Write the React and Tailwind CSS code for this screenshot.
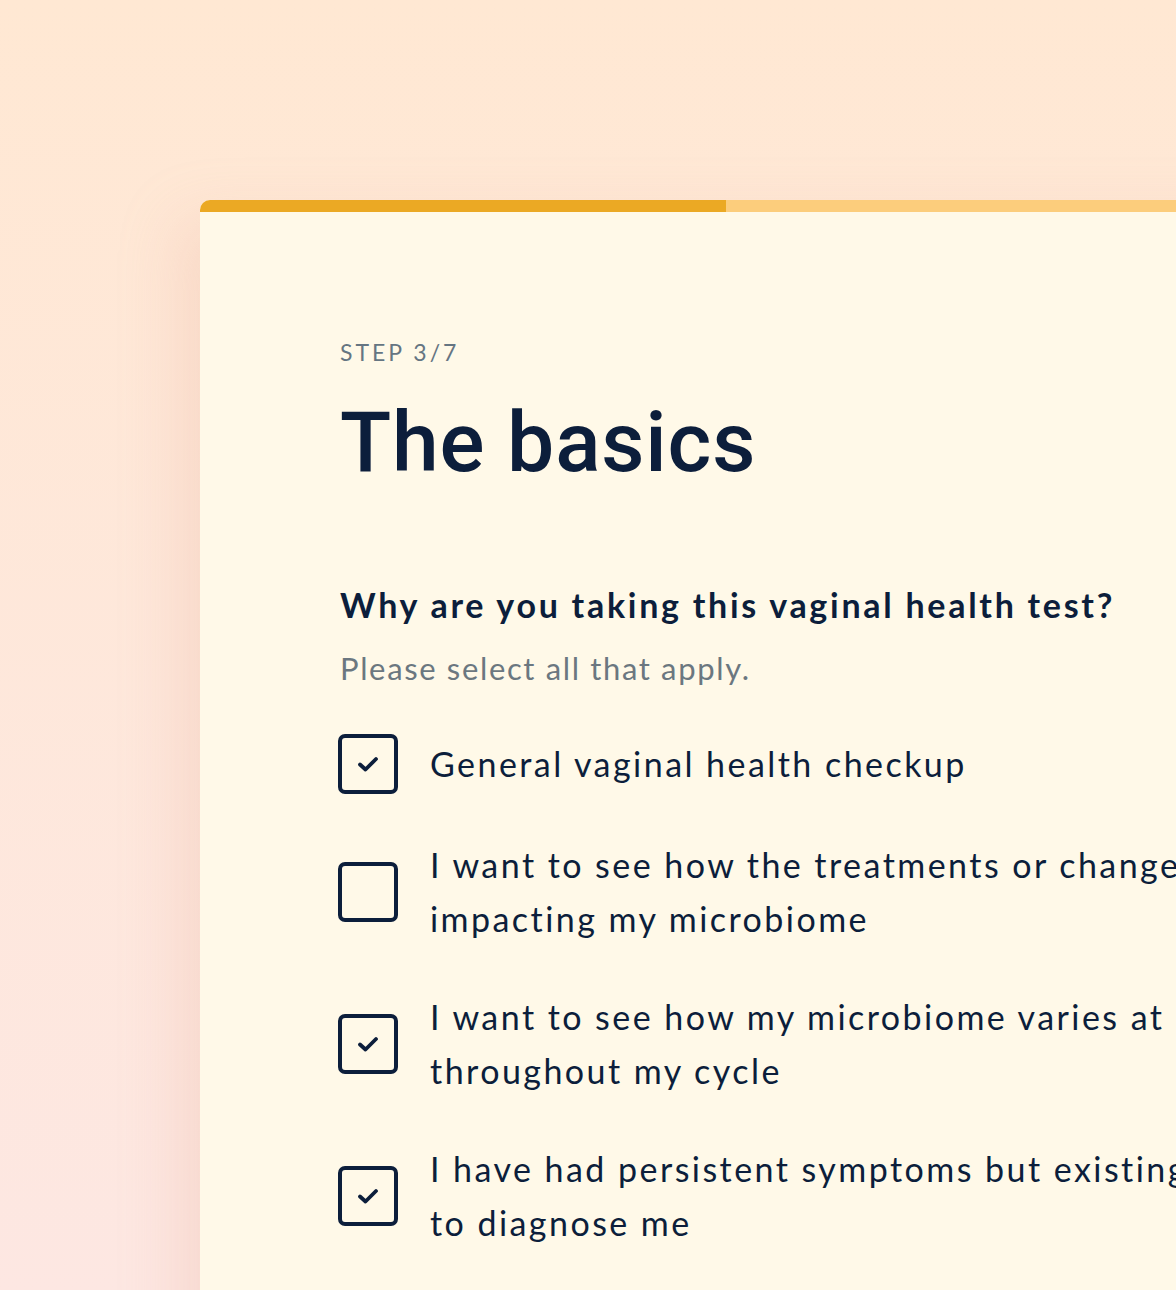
const options = [
  { lines: ['General vaginal health checkup'], checked: true },
  {
    lines: ["I want to see how the treatments or changes I've made are", 'impacting my microbiome'],
    checked: false,
  },
  {
    lines: ['I want to see how my microbiome varies at different points', 'throughout my cycle'],
    checked: true,
  },
  {
    lines: ['I have had persistent symptoms but existing tests have failed', 'to diagnose me'],
    checked: true,
  },
]

function Checkbox({ checked }) {
  return (
    <div className="flex h-[60px] w-[60px] shrink-0 items-center justify-center rounded-[7px] border-[4px] border-[#0c1e3b]">
      {checked && (
        <svg width="22" height="16" viewBox="0 0 22 16" fill="none">
          <path d="M3 8.5 L8.5 13.5 L19 3" stroke="#0c1e3b" strokeWidth="3.8" strokeLinecap="round" strokeLinejoin="round" />
        </svg>
      )}
    </div>
  )
}

export default function App() {
  return (
    <div
      className="h-[1290px] w-[1176px] overflow-hidden bg-gradient-to-b from-[#ffe8d3] to-[#fde7e2] pt-[200px] pl-[200px] text-[#0c1e3b]"
      style={{ fontFamily: 'Lato, "Noto Sans", sans-serif' }}
    >
      <div className="h-[1200px] w-[1500px] overflow-hidden rounded-tl-[10px] bg-[#fff9e8] shadow-[-20px_20px_60px_rgba(230,170,150,0.25)]">
        <div className="flex h-[12px]">
          <div className="w-[526px] bg-[#eba924]" />
          <div className="flex-1 bg-[#fccd7c]" />
        </div>

        <div className="pl-[140px] pt-[126px]">
          <p className="text-[23px] leading-[28px] tracking-[0.13em] text-[#657582]">STEP 3/7</p>
          <h1
            className="mt-[32px] text-[84px] font-medium leading-[90px] tracking-[0.01em] text-[#0c1e3b]"
            style={{ fontFamily: 'Roboto, "Liberation Sans", sans-serif' }}
          >
            The basics
          </h1>

          <h2 className="mt-[97px] text-[34px] font-bold leading-[40px] tracking-[0.08em]">
            Why are you taking this vaginal health test?
          </h2>
          <p className="mt-[23px] text-[31px] leading-[40px] tracking-[0.053em] text-[#6b7780]">
            Please select all that apply.
          </p>

          <ul className="mt-[46px] flex flex-col gap-[44px]">
            {options.map((o, i) => (
              <li key={i} className="-ml-[2px] flex items-center gap-[32px]">
                <Checkbox checked={o.checked} />
                <div className="text-[34px] leading-[54px] tracking-[0.072em]">
                  {o.lines.map((l, j) => (
                    <p key={j} className="whitespace-nowrap">
                      {l}
                    </p>
                  ))}
                </div>
              </li>
            ))}
          </ul>
        </div>
      </div>
    </div>
  )
}
